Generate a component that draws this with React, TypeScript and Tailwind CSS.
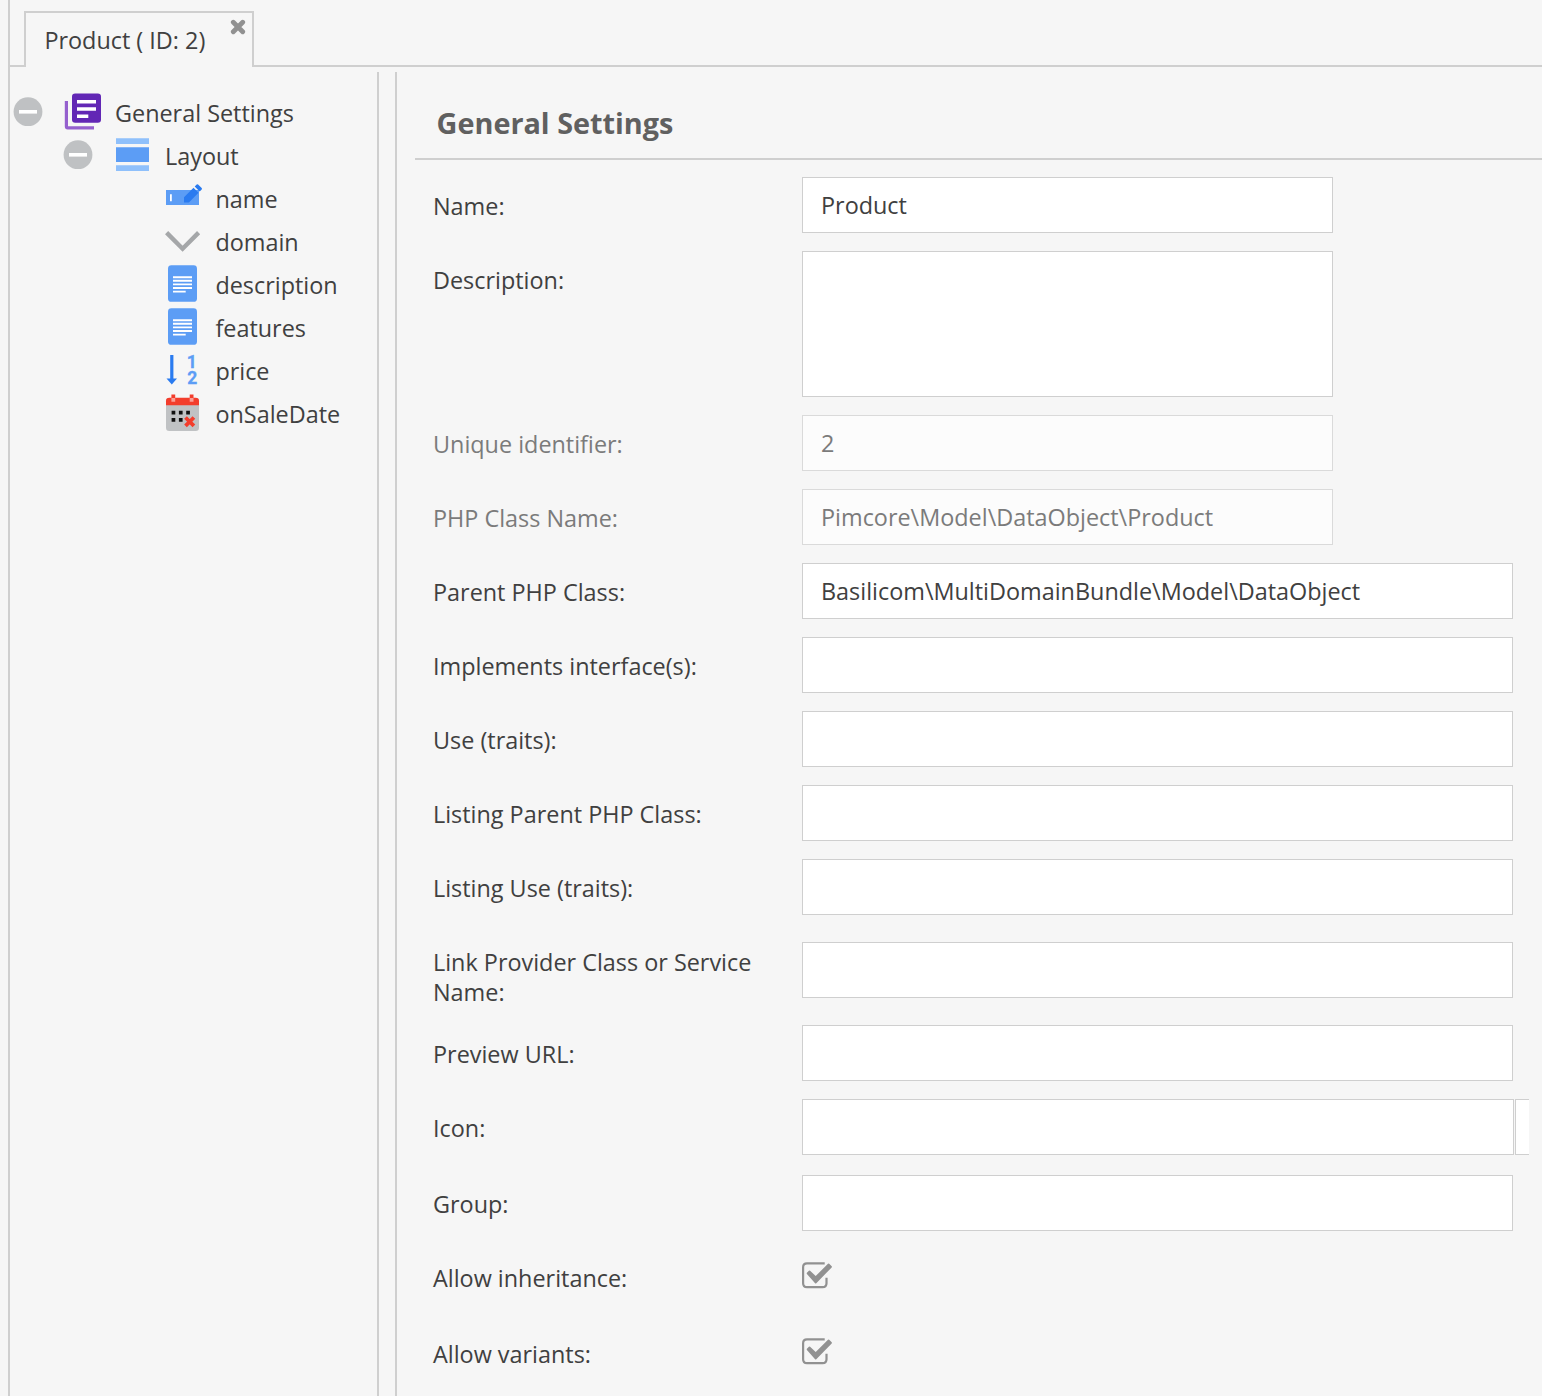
import type { ReactNode } from "react";

function Expander() {
  return (
    <svg width="30" height="43" viewBox="0 0 30 43" className="shrink-0">
      <circle cx="15" cy="20.7" r="14.4" fill="#bfc1c3" />
      <rect x="6" y="19" width="18" height="3.6" fill="#fff" />
    </svg>
  );
}

function IconBox({ children }: { children: ReactNode }) {
  return (
    <svg width="51" height="43" viewBox="0 0 51 43" className="shrink-0">
      {children}
    </svg>
  );
}

const ClassIcon = () => (
  <IconBox>
    <path d="M2.4 10V35.600Q2.400 36.900 3.700 36.900H30" fill="none" stroke="#9560ce" strokeWidth="3.2" />
    <rect x="8" y="2.4" width="29" height="29.4" rx="3.2" fill="#6227b5" />
    <path d="M13 10.7H32M13 18H32M13 25.2H24.3" stroke="#fff" strokeWidth="3.5" />
  </IconBox>
);

const LayoutIcon = () => (
  <IconBox>
    <path d="M2 4.300h33v5.700H2zM2 31.300h33v5.700H2z" fill="#8fc0fb" />
    <path d="M2 13.300h33v14.700H2z" fill="#5c9df5" />
  </IconBox>
);

const InputIcon = () => (
  <IconBox>
    <path d="M2 13h33v15H2z" fill="#5c9df5" />
    <path d="M6 17.2h1.8v7H6z" fill="#fff" />
    <path d="M20 25.4v-5.2l9.5-9.5 5 5-9.6 9.7zM30.7 9.5l2-1.9q.7-.6 1.4 0l3.6 3.5q.6.7 0 1.4l-2 2z" fill="#2a7bf0" />
  </IconBox>
);

const SelectIcon = () => (
  <IconBox>
    <path d="M2.6 12.6L18.6 28.7L34.6 12.6" fill="none" stroke="#a5a7a9" strokeWidth="4.400" />
  </IconBox>
);

const TextIcon = () => (
  <IconBox>
    <rect x="4" y="2.3" width="29" height="36.5" rx="3.4" fill="#5c9df5" />
    <path d="M9 14.2h19M9 17.8h19M9 21.4h19M9 25h19M9 28.6h12.7" stroke="#fff" strokeWidth="1.9" />
  </IconBox>
);

const NumberIcon = () => (
  <IconBox>
    <path d="M6.2 6h3.2v23.4H13l-5.2 6-5.3-6h3.7z" fill="#2a7bf0" />
    <g fill="#5c9df5" stroke="#5c9df5" strokeWidth="0.300" fontFamily="Roboto, sans-serif" fontWeight="700" fontSize="17.5">
      <text x="22.800" y="18.6">1</text>
      <text x="23.2" y="35">2</text>
    </g>
  </IconBox>
);

const DateIcon = () => (
  <IconBox>
    <rect x="2" y="6" width="33" height="33" rx="3.3" fill="#c0c2c4" />
    <path d="M2 13.3V9q0-3.2 3.3-3.2h26.4Q35 5.800 35 9v4.300z" fill="#f33d2c" />
    <path d="M7.400 2.500h3.800v4H7.400zM25.700 2.500h3.800v4h-3.800z" fill="#f33d2c" />
    <path d="M7.400 6h3.800v3.800H7.400zM25.700 6h3.800v3.800h-3.800z" fill="#fa9f96" />
    <path d="M7.600 18.700h3.700v3.700H7.600zM14.900 18.700h3.700v3.700h-3.700zM22.200 18.700h3.700v3.700h-3.700zM7.600 26h3.700v3.700H7.600zM14.900 26h3.700v3.700h-3.700z" fill="#111" />
    <path d="M21.500 25.500l8.400 8.400M29.900 25.500l-8.400 8.400" stroke="#f33d2c" strokeWidth="3.800" />
  </IconBox>
);

function CheckIcon() {
  return (
    <svg width="31" height="28" viewBox="0 0 31 28" className="block">
      <path d="M22.700 1.400H5Q1.100 1.400 1.100 5.300V21.200Q1.100 25.100 5 25.100H20.600Q24.500 25.100 24.500 21.200V15.800" fill="none" stroke="#919191" strokeWidth="2.200" />
      <path d="M4.900 11.900q-.5-.6 0-1.200l2-2q.6-.5 1.200 0l5.600 5.300L26 1.800q.6-.5 1.200 0l2.500 2.400q.5.600 0 1.200L14.300 21.200q-.6.500-1.200 0z" fill="#919191" />
    </svg>
  );
}

const leaves = [
  { label: "name", icon: <InputIcon /> },
  { label: "domain", icon: <SelectIcon /> },
  { label: "description", icon: <TextIcon /> },
  { label: "features", icon: <TextIcon /> },
  { label: "price", icon: <NumberIcon /> },
  { label: "onSaleDate", icon: <DateIcon /> },
];

function Field({
  label,
  value = "",
  box = "w-[711px] h-14",
  row = "mb-[18px]",
  disabled = false,
  children,
}: {
  label: string;
  value?: string;
  box?: string;
  row?: string;
  disabled?: boolean;
  children?: ReactNode;
}) {
  return (
    <div className={`flex items-start ${row}`}>
      <div className={`w-[369px] shrink-0 pr-10 pt-[14px] leading-[30px] ${disabled ? "text-[#7b7b7b]" : ""}`}>{label}</div>
      {children ?? (
        <div
          className={`shrink-0 border pl-[18px] leading-[54px] ${box} ${
            disabled ? "border-[#dadada] bg-[#fcfcfc] text-[#7b7b7b]" : "border-[#cfcfcf] bg-white"
          }`}
        >
          {value}
        </div>
      )}
    </div>
  );
}

export default function App() {
  return (
    <div className="flex h-[1396px] w-[1542px] overflow-hidden bg-[#f6f6f6] pl-2 font-['Open_Sans',sans-serif] text-[23.4px] text-[#404040]">
      <div className="flex min-w-0 flex-1 flex-col border-l-2 border-[#cfcfcf]">
        <div className="flex h-[67px] shrink-0 items-end">
          <div className="w-[14px] border-b-2 border-[#cfcfcf]" />
          <div className="flex h-14 w-[230px] items-start justify-between border-2 border-b-0 border-[#cfcfcf] pl-[18.400px] pr-[6px]">
            <span className="whitespace-nowrap pt-[10px] leading-[34px]">Product ( ID: 2)</span>
            <svg width="16" height="16" viewBox="0 0 16 16" className="mt-[6px]">
              <path d="M3.300 3.300L12.700 12.700M12.700 3.300L3.300 12.700" stroke="#919191" strokeWidth="4.800" strokeLinecap="round" />
            </svg>
          </div>
          <div className="flex-1 border-b-2 border-[#cfcfcf]" />
        </div>

        <div className="flex min-h-0 flex-1 pt-[5px]">
          <nav className="w-[369px] shrink-0 border-r-2 border-[#cfcfcf] pt-[19px] leading-[45px]">
            <div className="flex h-[43px] pl-[3px]">
              <Expander />
              <div className="w-[21px]" />
              <ClassIcon />
              <span>General Settings</span>
            </div>
            <div className="flex h-[43px] pl-[53px]">
              <Expander />
              <div className="w-[21px]" />
              <LayoutIcon />
              <span>Layout</span>
            </div>
            {leaves.map((leaf) => (
              <div key={leaf.label} className="flex h-[43px] pl-[154px]">
                {leaf.icon}
                <span className="pl-[0.400px]">{leaf.label}</span>
              </div>
            ))}
          </nav>

          <main className="ml-4 flex min-w-0 flex-1 flex-col border-l-2 border-[#cfcfcf] pl-[18px]">
            <h1 className="h-[88px] shrink-0 border-b-2 border-[#cfcfcf] pl-[21.600px] pt-[31px] text-[28.8px] font-bold leading-[40px] text-[#606060]">
              General Settings
            </h1>
            <div className="pl-[18px] pt-[17px]">
              <Field label="Name:" value="Product" box="w-[531px] h-14" />
              <Field label="Description:" box="w-[531px] h-[146px]" />
              <Field label="Unique identifier:" value="2" box="w-[531px] h-14" disabled />
              <Field label="PHP Class Name:" value="Pimcore\Model\DataObject\Product" box="w-[531px] h-14" disabled />
              <Field label="Parent PHP Class:" value="Basilicom\MultiDomainBundle\Model\DataObject" />
              <Field label="Implements interface(s):" />
              <Field label="Use (traits):" />
              <Field label="Listing Parent PHP Class:" />
              <Field label="Listing Use (traits):" />
              <Field label="Link Provider Class or Service Name:" row="mb-[18px] h-[74px]" box="mt-[9px] w-[711px] h-14" />
              <Field label="Preview URL:" />
              <Field label="Icon:" row="mb-5">
                <div className="flex gap-px">
                  <div className="h-14 w-[712px] border border-[#cfcfcf] bg-white" />
                  <div className="h-14 w-[14px] border border-r-0 border-[#cfcfcf] bg-white" />
                </div>
              </Field>
              <Field label="Group:" />
              <Field label="Allow inheritance:" row="h-[76px]">
                <div className="pt-[13px]">
                  <CheckIcon />
                </div>
              </Field>
              <Field label="Allow variants:" row="h-14">
                <div className="pt-[13px]">
                  <CheckIcon />
                </div>
              </Field>
            </div>
          </main>
        </div>
      </div>
    </div>
  );
}
